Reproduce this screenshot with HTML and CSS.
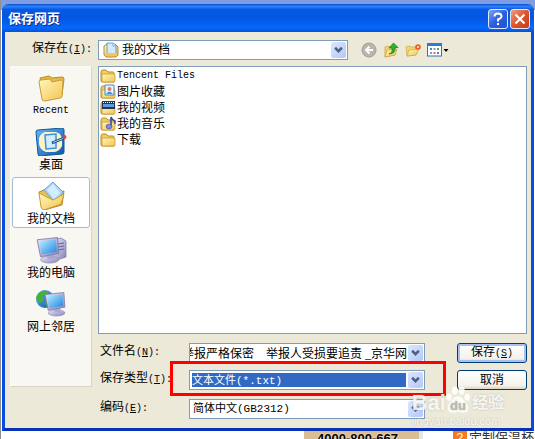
FILE: index.html
```html
<!DOCTYPE html>
<html lang="zh-CN">
<head>
  <meta charset="UTF-8">
  <title>保存网页</title>
  <link rel="stylesheet" href="styles.css">
</head>
<body>
  <!-- gradientes dos ícones -->
  <svg class="defs" aria-hidden="true">
    <defs>
      <linearGradient id="gold" x1="0" y1="0" x2="1" y2="1"><stop offset="0" stop-color="#fff8bc"/><stop offset="1" stop-color="#f2c350"/></linearGradient>
      <linearGradient id="screen" x1="0" y1="0" x2="1" y2="1"><stop offset="0" stop-color="#b8f0ff"/><stop offset="1" stop-color="#1d83e4"/></linearGradient>
      <linearGradient id="metal" x1="0" y1="0" x2="1" y2="1"><stop offset="0" stop-color="#e8e8fa"/><stop offset="1" stop-color="#8583b8"/></linearGradient>
      <linearGradient id="blue" x1="0" y1="0" x2="1" y2="1"><stop offset="0" stop-color="#67b5f4"/><stop offset="1" stop-color="#0b57a9"/></linearGradient>
      <symbol id="folder" viewBox="0 0 16 16">
        <path d="M1 4Q1 2 3 2h3l2 2h5q1 0 1 1v9H2q-1 0-1-1z" fill="#f3ce5c" stroke="#b88b24"/>
        <path d="M2 6h12q1 0 1 1v6q0 1-1 1H3q-1 0-1-1z" fill="url(#gold)" stroke="#c99c32" stroke-width=".8"/>
      </symbol>
      <symbol id="chevron" viewBox="0 0 8 7">
        <path d="M1 1.500l3 3 3-3" fill="none" stroke="#4d6185" stroke-width="2.200"/>
      </symbol>
      <symbol id="monitor" viewBox="0 0 22 24">
        <ellipse cx="12" cy="20.500" rx="8" ry="3" fill="url(#metal)" stroke="#8e8cb5" stroke-width=".6"/>
        <path d="M10 15l5-1 1 6h-6z" fill="#aaa8d0"/>
        <path d="M1 3l18-2 1 14-16 3z" fill="url(#metal)" stroke="#77759e" stroke-width=".7"/>
        <path d="M3 4.500l14.500-1.700.8 10.800L5 16z" fill="url(#screen)"/>
      </symbol>
    </defs>
  </svg>

  <div class="dialog">
    <header class="titlebar">
      <h1>保存网页</h1>
      <button class="caption help" aria-label="帮助"><svg viewBox="0 0 18 18"><path d="M5.500 6.500Q5.500 3.500 9 3.500t3.500 3Q12.500 8 9 9.500v2" fill="none" stroke="#fff" stroke-width="2"/><path d="M8 13h2v2H8z" fill="#fff"/></svg></button>
      <button class="caption close" aria-label="关闭"><svg viewBox="0 0 18 18"><path d="M4.500 4.500l9 9m0-9l-9 9" stroke="#fff" stroke-width="2.200"/></svg></button>
    </header>

    <main class="content">
      <div class="toolbar">
        <label for="lookin">保存在<span class="latin">(<u>I</u>):</span></label>
        <div class="combo lookin">
          <svg class="combo-icon" viewBox="0 0 16 16"><path d="M1 4l3-2h8l3 3v8l-2 2H3l-2-2z" fill="url(#gold)" stroke="#b58c2f"/><path d="M4 1h6l3 3v8H4z" fill="#d4eaff" stroke="#548cc4" stroke-width=".8"/><path d="M10 1v3h3" fill="#fff" stroke="#548cc4" stroke-width=".7"/><path d="M2 11h12v2l-1 1H3l-1-1z" fill="#f1c858"/></svg>
          <select id="lookin"><option>我的文档</option></select>
          <span class="arrow"><svg><use href="#chevron"/></svg></span>
        </div>
        <nav class="tools">
          <button aria-label="后退"><svg viewBox="0 0 16 16"><circle cx="8" cy="8" r="7" fill="#b7b6ad" stroke="#a09f98"/><path d="M12 8H5m3.500-3.500L5 8l3.500 3.500" fill="none" stroke="#fff" stroke-width="2"/></svg></button>
          <button aria-label="向上一级"><svg viewBox="0 0 16 16"><path d="M2 5l4-1 1 1h5v8l-10 2z" fill="#f4d471" stroke="#c7a23a" stroke-width=".7"/><path d="M2 15l2-7 10-1-2 6z" fill="url(#gold)" stroke="#c7a23a" stroke-width=".7"/><path d="M6 12q4-1 3-6H6l4.500-5L15 5.500h-3q1 6-6 6.500z" fill="#2db52a" stroke="#167814" stroke-width=".7"/></svg></button>
          <button aria-label="新建文件夹"><svg viewBox="0 0 16 16"><path d="M1 5l4-1 1 1h5v8l-9 1z" fill="#f4d471" stroke="#cda83e" stroke-width=".7"/><path d="M2 14l2-6 10-1-3 6z" fill="url(#gold)" stroke="#cda83e" stroke-width=".7"/><circle cx="13" cy="5" r="2" fill="#ffd08a" stroke="#ee5b29" stroke-width="1.600"/></svg></button>
          <button class="views" aria-label="查看"><svg viewBox="0 0 22 16"><rect x=".5" y="2" width="14" height="12" fill="#fff" stroke="#2b72c9"/><path d="M0 1h15v3H0z" fill="#2b7bdd"/><path d="M3 6h2v2H3zm7 4h2v2h-2z" fill="#4c82c8"/><path d="M6.500 6h2v2h-2zM3 10h2v2H3z" fill="#6f9ed9"/><path d="M10 6h2v2h-2z" fill="#54a845"/><path d="M6.500 10h2v2h-2z" fill="#c97048"/><path d="M16.500 7h5L19 10z"/></svg></button>
        </nav>
      </div>

      <nav class="places">
        <button class="place">
          <svg viewBox="0 0 32 28"><path d="M5 4l9-2 3 2 10-1q2 0 2 2l-2 16-17 5q-2 0-2-2z" fill="#e9b941" stroke="#b88b24"/><path d="M4 8q0-2 2-2l9-1 2 3 9-2q2 0 2 2l-1 14q0 2-2 2l-15 3q-3 0-3-2z" fill="url(#gold)" stroke="#c79b35"/></svg>
          <span class="latin">Recent</span>
        </button>
        <button class="place">
          <svg viewBox="0 0 32 28"><path d="M1 4q0-2 2-2l24-2q2 0 2 2v22q0 2-2 2L5 28q-2 0-2-2z" fill="url(#blue)" stroke="#15549d"/><path d="M10 4h11q6 2 6 8v6q-3 6-9 6h-7q-6-2-7-8V10q2-5 6-6z" fill="#fbf3c6"/><path d="M10 7l11-1v14l-10 1z" fill="#d2ecff" stroke="#3d91de" stroke-width="1.500"/><path d="M17 15l12-5" stroke="#174776" stroke-width="2.800"/><path d="M18 14.500l10-4" stroke="#a6d8fa"/><circle cx="29.500" cy="9" r="2" fill="#d9482f"/></svg>
          <span>桌面</span>
        </button>
        <button class="place selected">
          <svg viewBox="0 0 32 28"><path d="M4 10l7-3 4 4 14-2-2 14-18 5z" fill="#efc14c" stroke="#b88b24"/><path d="M9 8l9-8 10 10-7 12z" fill="#a9d7fc" stroke="#6a9fd6"/><path d="M12 8l6-6 7 9-6 6z" fill="#d3edff"/><path d="M4 11l14 7 11-6-3 10-17 6q-2 0-3-3z" fill="url(#gold)" stroke="#c79b35"/></svg>
          <span>我的文档</span>
        </button>
        <button class="place">
          <svg viewBox="0 0 32 28"><path d="M18 4l8-2 5 3v16l-9 3-4-2z" fill="url(#metal)" stroke="#7876a4" stroke-width=".7"/><path d="M23 8l6-1m-6 4l6-1m-6 4l6-1" stroke="#66638f"/><use href="#monitor" x="1" y="0" width="25" height="28"/></svg>
          <span>我的电脑</span>
        </button>
        <button class="place">
          <svg viewBox="0 0 32 28"><circle cx="10" cy="9" r="9" fill="url(#blue)"/><path d="M3 4q5-6 10-2l-2 3-4 1 2 4-4 3-4-5zM11 8l6 2-3 7-4-3z" fill="#44b235"/><use href="#monitor" x="9" y="0" width="23" height="28"/></svg>
          <span>网上邻居</span>
        </button>
      </nav>

      <ul class="files">
        <li><svg><use href="#folder"/></svg><span class="latin">Tencent Files</span></li>
        <li><svg viewBox="0 0 16 16"><use href="#folder"/><path d="M5 1h9v10H5z" fill="#e8f5ff" stroke="#4a87c6"/><circle cx="9.500" cy="5" r="2" fill="#e9765b"/><path d="M6 10q3.500-5 7 0z" fill="#3697dd"/></svg>图片收藏</li>
        <li><svg viewBox="0 0 16 16"><use href="#folder"/><path d="M2 1h13v8H2z" fill="#26364f"/><path d="M3 4h11v3H3z" fill="#5b9ce1"/><path d="M3 2.500h11" stroke="#fff" stroke-dasharray="1 1"/></svg>我的视频</li>
        <li><svg viewBox="0 0 16 16"><use href="#folder"/><path d="M11 10V1q1 3 4 4v3" fill="none" stroke="#3744a6" stroke-width="1.500"/><ellipse cx="9" cy="10.500" rx="3" ry="2.300" fill="#7d8ae0" stroke="#3744a6" stroke-width=".6"/></svg>我的音乐</li>
        <li><svg><use href="#folder"/></svg>下载</li>
      </ul>

      <form class="fields">
        <label for="filename">文件名<span class="latin">(<u>N</u>):</span></label>
        <div class="combo">
          <input type="text" id="filename" value="举报严格保密　举报人受损要追责 _京华网">
          <span class="arrow"><svg><use href="#chevron"/></svg></span>
        </div>
        <button type="button" class="action default">保存<span class="latin">(<u>S</u>)</span></button>

        <label for="filetype">保存类型<span class="latin">(<u>T</u>):</span></label>
        <div class="combo marked">
          <select id="filetype" class="focused"><option>文本文件(*.txt)</option></select>
          <span class="arrow"><svg><use href="#chevron"/></svg></span>
        </div>
        <button type="button" class="action">取消</button>

        <label for="encoding">编码<span class="latin">(<u>E</u>):</span></label>
        <div class="combo">
          <select id="encoding"><option>简体中文(GB2312)</option></select>
          <span class="arrow"><svg><use href="#chevron"/></svg></span>
        </div>
      </form>
    </main>

    <div class="watermark">
      <div class="brand">
        <span>Bai</span>
        <span class="paw"><svg viewBox="0 0 26 30"><g fill="currentColor"><ellipse cx="3.500" cy="12" rx="3" ry="4"/><ellipse cx="9.500" cy="5" rx="3.200" ry="4.500"/><ellipse cx="17" cy="5" rx="3.200" ry="4.500"/><ellipse cx="23" cy="12" rx="3" ry="4"/><path d="M13 11q4 0 6 4 5 4 5 9 0 5-5 5-3 0-6-1-3 1-6 1-5 0-5-5t5-9q2-4 6-4z"/></g></svg><b>du</b></span>
        <span class="cjk">经验</span>
      </div>
      <div class="site">jingyan.baidu.com</div>
    </div>
  </div>

  <div class="behind">
    <div class="banner">4000-800-667</div>
    <div class="ad"><span class="rank">2</span>定制保温杯</div>
  </div>
</body>
</html>
```

FILE: styles.css
```css
* {
  box-sizing: border-box;
}
body {
  margin: 0;
  padding: 4px 1px 0;
  height: 100vh;
  overflow: hidden;
  background: linear-gradient(#7f9de2 0, #7f9de2 10px, #fff 10px);
  border-left: 1px solid #8c8f96;
  font-family: "Liberation Serif", "Noto Sans CJK SC", sans-serif;
  font-size: 12px;
  line-height: 16px;
  color: #000;
}
button, input, select {
  font: inherit;
  color: inherit;
  margin: 0;
}
.defs {
  position: absolute;
  width: 0;
  height: 0;
}
.latin {
  font-family: "Liberation Mono", monospace;
  font-size: 10px;
}

/* janela */
.dialog {
  position: relative;
  background: #ece9d8;
  border: 3px solid #0a4be0;
  border-top: 0;
  border-bottom-color: #0831b8;
  border-radius: 7px 7px 0 0;
}
.titlebar {
  display: flex;
  align-items: center;
  gap: 2px;
  height: 28px;
  margin: 0 -3px;
  padding: 2px 4px 0 6px;
  border-radius: 7px 7px 0 0;
  background: linear-gradient(#0a48c8 0, #2b83fb 8%, #0759e4 20%, #0456e2 50%, #0668fc 85%, #0552d8 100%);
}
.titlebar h1 {
  flex: 1;
  margin: 0;
  font-size: 13px;
  color: #fff;
  text-shadow: 1px 1px #0a2f8a;
}
.caption {
  width: 20px;
  height: 20px;
  padding: 0;
  border: 1px solid #dfe8fb;
  border-radius: 3px;
}
.caption svg {
  display: block;
}
.help {
  background: linear-gradient(135deg, #7ea4f6, #2a5fe0 50%, #2352cf);
}
.close {
  background: linear-gradient(135deg, #f0a080, #e0532c 50%, #c33d12);
}

.content {
  display: grid;
  grid-template-columns: 82px minmax(0, 1fr);
  column-gap: 6px;
  padding: 7px 4px 9px 5px;
}

/* barra superior */
.toolbar {
  grid-column: 1 / 3;
  display: flex;
  align-items: center;
  height: 21px;
  margin-bottom: 6px;
}
.toolbar label {
  width: 88px;
  padding: 0 6px 2px 0;
  text-align: right;
}
.lookin {
  flex: 0 1 250px;
}
.tools {
  display: flex;
  gap: 6px;
  margin-left: 13px;
}
.tools button {
  padding: 0;
  border: 0;
  background: none;
}
.tools svg {
  display: block;
  width: 16px;
  height: 16px;
}
.tools .views svg {
  width: 22px;
}

.combo {
  position: relative;
  display: flex;
  align-items: center;
  height: 20px;
  background: #fff;
  border: 1px solid #7f9db9;
}
.combo select, .combo input {
  flex: 1;
  min-width: 0;
  width: 100%;
  height: 18px;
  padding: 1px 18px 1px 3px;
  border: 0;
  outline: 0;
  background: none;
  appearance: none;
}
.combo input {
  margin-right: 17px;
  padding: 0;
  text-indent: -8px;
}
.fields select {
  font-family: "Liberation Mono", "Noto Sans CJK SC", monospace;
  font-size: 11px;
}
.combo .focused {
  padding: 2px 18px 2px 2px;
  color: #fff;
  background: linear-gradient(#316ac5, #316ac5) content-box;
}
.combo-icon {
  flex: none;
  width: 16px;
  height: 16px;
  margin-left: 4px;
}
.arrow {
  position: absolute;
  top: 1px;
  right: 1px;
  bottom: 1px;
  width: 15px;
  display: grid;
  place-items: center;
  border-radius: 2px;
  background: linear-gradient(135deg, #dce6fe, #b4c8f6);
  pointer-events: none;
}
.arrow svg {
  width: 9px;
  height: 8px;
}

/* atalhos à esquerda */
.places {
  grid-row: 2 / 4;
  display: flex;
  flex-direction: column;
  gap: 3px;
  margin: 0 0 32px;
  padding: 2px 1px;
  background: #f8f7f1;
  border: 1px solid #fbfaf6;
  border-right-color: #d8d5c8;
  border-bottom-color: #d8d5c8;
}
.place {
  display: flex;
  flex-direction: column;
  align-items: center;
  gap: 1px;
  height: 51px;
  padding: 4px 0 0;
  border: 1px solid transparent;
  border-radius: 3px;
  background: none;
}
.place svg {
  width: 32px;
  height: 28px;
}
.selected {
  background: #fff;
  border-color: #a3bdd0;
}

.files {
  min-height: 268px;
  margin: 0;
  padding: 1px;
  list-style: none;
  background: #fff;
  border: 1px solid #7f9db9;
}
.files li {
  display: flex;
  align-items: center;
  gap: 1px;
  height: 16px;
}
.files svg {
  width: 16px;
  height: 16px;
}

/* campos */
.fields {
  display: grid;
  grid-template: 20px 20px 22px / 91px minmax(0, 1fr) 70px;
  row-gap: 7px;
  align-items: end;
  margin-top: 9px;
}
.fields label {
  padding-left: 2px;
  line-height: 20px;
}
.fields .combo {
  margin-right: 32px;
}
.action {
  height: 20px;
  padding: 0;
  border: 1px solid #003c74;
  border-radius: 3px;
  background: linear-gradient(#fff, #f3f2ec 80%, #d9d5c8);
}
.default {
  box-shadow: inset 0 0 0 2px #a9c1f0;
}
.marked::after {
  content: "";
  position: absolute;
  top: -10px;
  right: -22px;
  bottom: -7px;
  left: -20px;
  border: 3px solid #f00;
  pointer-events: none;
}

.watermark {
  position: absolute;
  right: 27px;
  bottom: 0;
  color: rgba(255, 255, 255, 0.85);
  font-family: "Liberation Sans", "Noto Sans CJK SC", sans-serif;
  text-shadow: 0 0 2px rgba(140, 140, 130, 0.5);
  pointer-events: none;
}
.brand {
  display: flex;
  align-items: flex-end;
  font-size: 22px;
  line-height: 22px;
  font-weight: bold;
}
.paw {
  position: relative;
  width: 24px;
  height: 28px;
}
.paw svg {
  display: block;
}
.paw b {
  position: absolute;
  left: 4px;
  bottom: 1px;
  font-size: 13px;
  line-height: 14px;
  color: #b9b7ad;
}
.brand .cjk {
  margin-left: 2px;
  font-size: 16px;
}
.site {
  font-size: 11px;
  line-height: 14px;
}

/* página por trás da janela */
.behind {
  display: flex;
  justify-content: flex-end;
  gap: 30px;
  line-height: 13px;
  font-family: "Liberation Sans", "Noto Sans CJK SC", sans-serif;
  font-size: 13px;
}
.banner {
  width: 119px;
  height: 20px;
  padding: 1px 8px 0 0;
  border-right: 4px solid #e5e5e5;
  background: #d9bd93;
  font-weight: bold;
  text-align: center;
  text-shadow: 0 0 2px #fff;
}
.ad {
  color: #333;
}
.rank {
  display: inline-block;
  width: 14px;
  margin-right: 2px;
  background: #f47a20;
  color: #fff;
  text-align: center;
}
```
